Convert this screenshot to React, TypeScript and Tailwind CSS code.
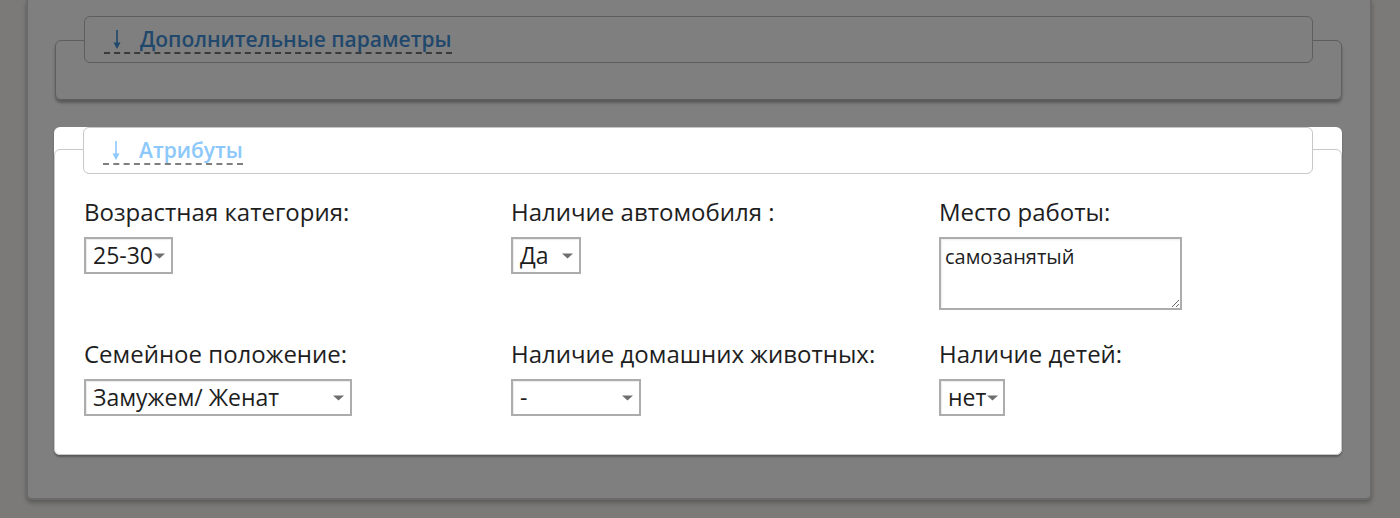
import React from 'react'

function Caret() {
  return (
    <svg width="11" height="8" viewBox="0 0 11 8" className="shrink-0">
      <path d="M0 1.5h11L5.5 6.5z" fill="#6e6e6e" />
    </svg>
  )
}

function DownArrow({ color }: { color: string }) {
  return (
    <svg width="8" height="20" viewBox="0 0 8 20" className="shrink-0">
      <path d="M4 0v15" stroke={color} strokeWidth="1.6" />
      <path d="M0.5 12.5L4 19l3.5-6.5z" fill={color} />
    </svg>
  )
}

function Select({ value, width }: { value: string; width: string }) {
  return (
    <div
      className={`${width} flex h-[37px] items-center justify-between gap-[1px] whitespace-nowrap border-2 border-[#acacac] bg-white pl-[7px] pr-[6px] text-[23px] text-[#1e1e1e] shadow-[inset_1px_1px_1px_rgba(0,0,0,0.08)]`}
    >
      <span className="leading-none">{value}</span>
      <Caret />
    </div>
  )
}

function Field({ label, children }: { label: string; children: React.ReactNode }) {
  return (
    <div className="flex flex-col items-start">
      <div className="mb-[11px] text-[24px] leading-[28px] text-[#1e1e1e]">{label}</div>
      {children}
    </div>
  )
}

function LegendLink({ text, dim }: { text: string; dim?: boolean }) {
  const color = dim ? '#1f486c' : '#8cc8fb'
  return (
    <span
      className={`flex items-end gap-[19px] border-b-2 border-dashed pl-[9px] text-[21px] font-semibold leading-[26px] ${
        dim ? 'border-[#3a3a3a] text-[#1f486c]' : 'border-[#7f7f7f] text-[#8cc8fb]'
      }`}
    >
      <span className="pb-[2px]">
        <DownArrow color={color} />
      </span>
      {text}
    </span>
  )
}

export default function App() {
  return (
    <div className="h-[518px] w-[1400px] overflow-hidden bg-[#7b7a79] font-['Open_Sans',sans-serif]">
      <div className="ml-[26px] w-[1346px] rounded-b-md border-x-2 border-b-2 border-[#6a6a6a] bg-[#7f7f7f] pt-[40px] pr-[28px] pb-[43px] pl-[27px] shadow-[0_3px_4px_rgba(0,0,0,0.25)]">
        {/* Дополнительные параметры — под затемнением */}
        <div className="rounded-md border border-[#5e5e5e] pb-[36px] shadow-[0_3px_3px_rgba(0,0,0,0.3)]">
          <div className="mx-[28px] -mt-[25px] flex h-[47px] items-center rounded-md border border-[#5e5e5e] bg-[#7f7f7f] pl-[19px]">
            <LegendLink text="Дополнительные параметры" dim />
          </div>
        </div>

        {/* Атрибуты — активная панель */}
        <div className="mt-[27px] -ml-px rounded-md bg-white pt-[22px] shadow-[0_2px_2px_rgba(0,0,0,0.3)]">
          <div className="rounded-md border border-[#c8c8c8] pb-[38px]">
            <div className="mx-[28px] -mt-[23px] flex h-[47px] items-center rounded-md border border-[#c8c8c8] bg-white pl-[19px]">
              <LegendLink text="Атрибуты" />
            </div>
            <div className="grid grid-cols-[427px_428px_1fr] gap-y-[30px] pt-[24px] pl-[29px]">
              <Field label="Возрастная категория:">
                <Select value="25-30" width="w-[89px]" />
              </Field>
              <Field label="Наличие автомобиля :">
                <Select value="Да" width="w-[70px]" />
              </Field>
              <Field label="Место работы:">
                <textarea
                  readOnly
                  defaultValue="самозанятый"
                  className="h-[73px] w-[243px] border-2 border-[#acacac] px-[4px] py-[6px] font-['Open_Sans',sans-serif] text-[20px] leading-[24px] text-[#1e1e1e] shadow-[inset_1px_1px_2px_rgba(0,0,0,0.08)] outline-none"
                />
              </Field>
              <Field label="Семейное положение:">
                <Select value="Замужем/ Женат" width="w-[268px]" />
              </Field>
              <Field label="Наличие домашних животных:">
                <Select value="-" width="w-[130px]" />
              </Field>
              <Field label="Наличие детей:">
                <Select value="нет" width="w-[66px]" />
              </Field>
            </div>
          </div>
        </div>
      </div>
    </div>
  )
}
